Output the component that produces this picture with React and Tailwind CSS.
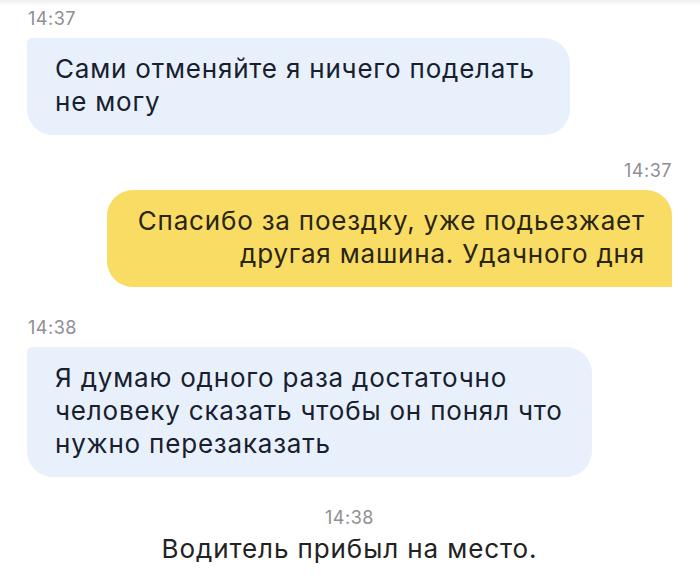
export default function App() {
  const font = { fontFamily: "Inter, 'Noto Sans', sans-serif" };
  return (
    <div className="w-[700px] h-[579px] bg-white overflow-hidden" style={font}>
      <div className="h-[6px] bg-gradient-to-b from-[#eeeeee] to-white" />
      <div className="flex flex-col pl-[27px] pr-[28px]">
        <div className="mt-[2px] ml-px text-[18px] leading-[22px] tracking-[0.5px] text-[#8e8e93]">14:37</div>
        <div className="mt-[8px] w-[543px] rounded-[26px] rounded-tl-[5px] bg-[#e8f0fc] pl-[28px] pr-[16px] pt-[14px] pb-[17px] text-[26px] leading-[33px] tracking-[0.8px] text-[#18202e]">
          Сами отменяйте я ничего поделать
          <br />
          не могу
        </div>

        <div className="mt-[25px] self-end text-[18px] leading-[22px] tracking-[0.5px] text-[#8e8e93]">14:37</div>
        <div className="mt-[8px] self-end w-[565px] rounded-[26px] rounded-br-none bg-[#f8dc64] pr-[27px] pl-[16px] pt-[14px] pb-[17px] text-right text-[26px] leading-[33px] tracking-[0.8px] text-[#2a2511]">
          Спасибо за поездку, уже подьезжает
          <br />
          другая машина. Удачного дня
        </div>

        <div className="mt-[30px] ml-px text-[18px] leading-[22px] tracking-[0.5px] text-[#8e8e93]">14:38</div>
        <div className="mt-[8px] w-[565px] rounded-[26px] rounded-tl-[5px] bg-[#e8f0fc] pl-[28px] pr-[16px] pt-[14px] pb-[17px] text-[26px] leading-[33px] tracking-[0.8px] text-[#18202e]">
          Я думаю одного раза достаточно
          <br />
          человеку сказать чтобы он понял что
          <br />
          нужно перезаказать
        </div>

        <div className="mt-[30px] self-center text-[18px] leading-[22px] tracking-[0.5px] text-[#8e8e93]">14:38</div>
        <div className="mt-[5px] self-center text-[26px] leading-[30px] tracking-[0.9px] text-[#222222]">
          Водитель прибыл на место.
        </div>
      </div>
    </div>
  );
}
